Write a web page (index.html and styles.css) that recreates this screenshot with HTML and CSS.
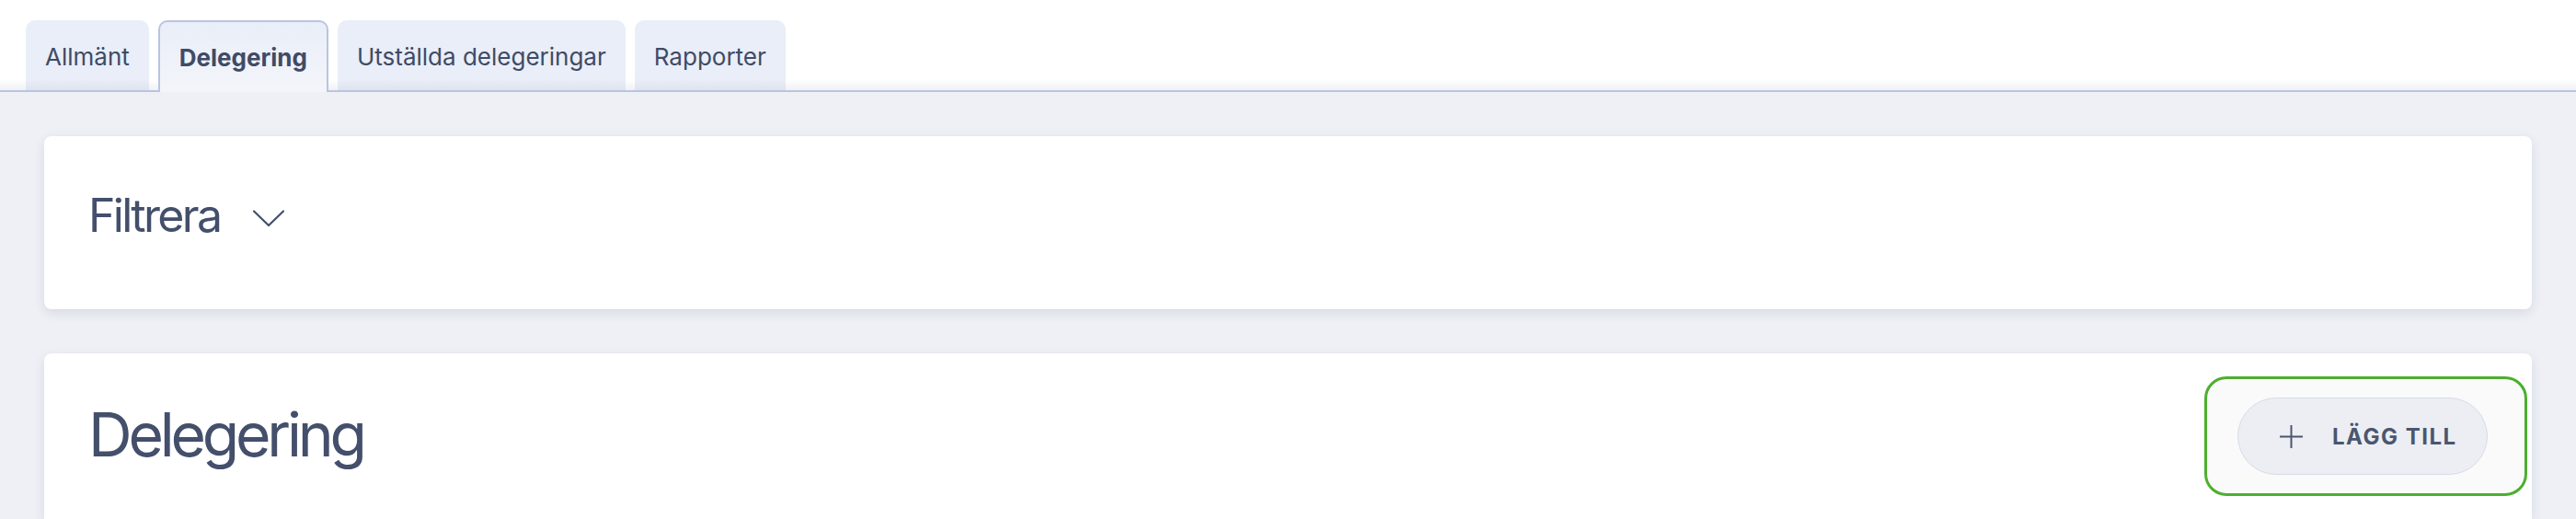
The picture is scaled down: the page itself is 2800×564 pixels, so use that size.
FILE: index.html
```html
<!DOCTYPE html>
<html lang="sv">
<head>
<meta charset="utf-8">
<title>Delegering</title>
<link rel="stylesheet" href="styles.css">
</head>
<body>
<div class="tabbar">
  <div class="tab">Allmänt</div>
  <div class="tab active">Delegering</div>
  <div class="tab">Utställda delegeringar</div>
  <div class="tab">Rapporter</div>
</div>
<main class="content">
  <section class="card filter-card">
    <h2 class="filter-title">Filtrera</h2>
    <svg class="chevron" width="34" height="19" viewBox="0 0 34 19" fill="none"><path d="M1 1.5 L17 17 L33 1.5" stroke="#434f6b" stroke-width="2.2" stroke-linecap="round" stroke-linejoin="round"/></svg>
  </section>
  <section class="card list-card">
    <div class="list-header">
      <h1 class="list-title">Delegering</h1>
      <div class="highlight">
        <button class="add-btn">
          <svg class="plus" width="25" height="25" viewBox="0 0 25 25" fill="none"><path d="M12.5 0.5 V24.5 M0.5 12.5 H24.5" stroke="#4a566f" stroke-width="2" stroke-linecap="round"/></svg>
          <span>LÄGG TILL</span>
        </button>
      </div>
    </div>
  </section>
</main>
</body>
</html>
```
FILE: styles.css
```css
* { box-sizing: border-box; }
html, body { margin: 0; padding: 0; }
body {
  font-family: Inter, "Noto Sans", sans-serif;
  color: #434f6b;
  background: #eef0f5;
  height: 564px;
  overflow: hidden;
}
.tabbar {
  display: flex;
  align-items: flex-end;
  gap: 10px;
  height: 98px;
  padding: 0 28px;
  background: linear-gradient(to bottom, #ffffff 0, #ffffff 86px, #f0f1f4 98px);
  border-bottom: 2px solid #b9c4df;
  box-sizing: content-box;
}
.tab {
  height: 76px;
  padding: 2px 21px 0;
  display: flex;
  align-items: center;
  font-size: 26px;
  color: #3f4b66;
  background: linear-gradient(to bottom, #e9eef8 0, #e9eef8 64px, #dfe3ee 76px);
  border-radius: 10px 10px 0 0;
}
.tab.active {
  font-weight: 700;
  background: linear-gradient(to bottom, #e9eef8 0, #f3f5fa 76px);
  border: 2px solid #b9c4df;
  border-bottom: none;
  margin-bottom: -2px;
  height: 78px;
  padding-top: 2px;
  padding-bottom: 2px;
}
.content {
  padding: 48px 48px 0;
  display: flex;
  flex-direction: column;
  gap: 48px;
}
.card {
  background: #fff;
  border-radius: 8px;
  box-shadow: 0 4px 12px rgba(60, 72, 120, 0.13);
}
.filter-card {
  height: 188px;
  display: flex;
  align-items: center;
  padding: 0 48px 16px;
}
.filter-title {
  margin: 0;
  font-size: 50px;
  font-weight: 400;
  line-height: 1;
  letter-spacing: -2.7px;
}
.chevron { margin-left: 36px; margin-top: 6px; }
.list-card {
  height: 180px;
  border-radius: 8px 8px 0 0;
}
.list-header {
  display: flex;
  justify-content: space-between;
  align-items: center;
  padding: 21px 5px 0 48px;
}
.list-title {
  margin: 0;
  font-size: 66px;
  font-weight: 400;
  line-height: 1;
  letter-spacing: -4.2px;
}
.highlight {
  width: 351px;
  height: 130px;
  margin-top: 4px;
  border: 3px solid #4caf2e;
  border-radius: 24px;
  background: #fafafb;
  display: flex;
  align-items: center;
  padding-left: 33px;
}
.add-btn {
  width: 272px;
  height: 84px;
  border-radius: 42px;
  border: 1.5px solid #d6dbe7;
  background: #eceef3;
  display: flex;
  align-items: center;
  padding: 0 0 0 45px;
  gap: 32px;
  font-family: Inter, "Noto Sans", sans-serif;
  font-size: 24px;
  font-weight: 700;
  letter-spacing: 1.5px;
  color: #4a566f;
}
```
